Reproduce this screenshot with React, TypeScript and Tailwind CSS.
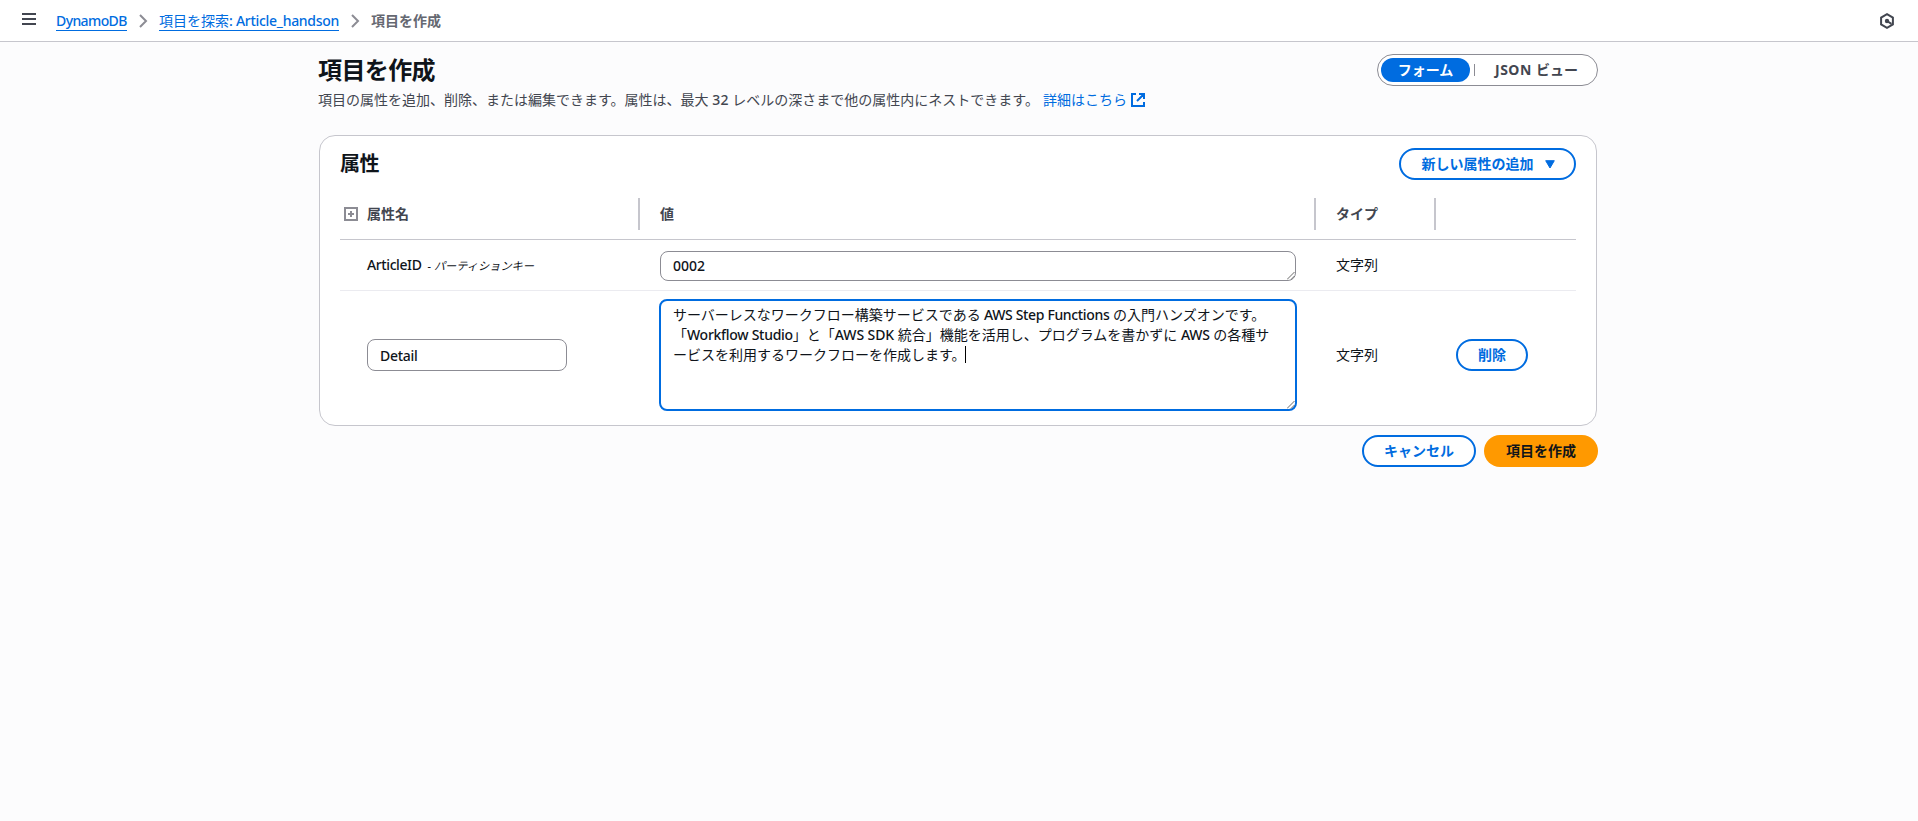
import type { ReactNode } from "react";

function Latin({ children, className = "tracking-[-0.28px]" }: { children: ReactNode; className?: string }) {
    return <span className={`font-medium ${className}`}>{children}</span>;
}

function BreadcrumbChevron() {
    return (
        <svg className="h-4 w-4 text-[#8c8c94]" viewBox="0 0 16 16" fill="none" stroke="currentColor" strokeWidth="2">
            <path d="M5 2l6 6-6 6" />
        </svg>
    );
}

function ResizeHandle() {
    return (
        <svg className="absolute bottom-0 right-0 h-2 w-2 text-[#6b6b6b]" viewBox="0 0 8 8" fill="none" stroke="currentColor">
            <path d="M0 7.5L7.5 0M4 7.5L7.5 4" />
        </svg>
    );
}

function PillButton({ children, className }: { children: ReactNode; className?: string }) {
    return (
        <button
            className={`flex h-8 items-center justify-center rounded-full border-2 border-[#006ce0] bg-white font-bold text-[#006ce0] ${className}`}
        >
            {children}
        </button>
    );
}

function TopBar() {
    return (
        <header className="flex h-[42px] items-center border-b border-[#c6c6cd] bg-white pl-[22px] pr-[23px]">
            <svg className="-mt-1 h-3 w-3.5 text-[#424650]" viewBox="0 0 14 12" fill="none" stroke="currentColor" strokeWidth="2">
                <path d="M0 1h14M0 6h14M0 11h14" />
            </svg>
            <nav className="ml-5 flex items-center">
                <a className="h-5 w-[71px] whitespace-nowrap border-b border-[#006ce0] text-[#006ce0]">
                    <Latin className="tracking-[-0.6px]">DynamoDB</Latin>
                </a>
                <span className="mx-2">
                    <BreadcrumbChevron />
                </span>
                <a className="h-5 w-[180px] whitespace-nowrap border-b border-[#006ce0] text-[#006ce0]">
                    項目を探索<Latin>: Article_handson</Latin>
                </a>
                <span className="mx-2">
                    <BreadcrumbChevron />
                </span>
                <span className="font-bold text-[#656871]">項目を作成</span>
            </nav>
            <svg className="ml-auto h-4 w-4 text-[#424650]" viewBox="0 0 16 16" fill="none" stroke="currentColor" strokeWidth="2">
                <path d="M8 1.2l5.9 3.4v6.8L8 14.8l-5.9-3.4V4.6z" />
                <path d="M8 8l4.5 2.8" />
                <circle cx="8" cy="8" r="2.2" fill="currentColor" stroke="none" />
            </svg>
        </header>
    );
}

function PageHeader() {
    return (
        <div className="flex justify-between">
            <div className="-ml-px">
                <h1 className="mt-[13px] text-2xl font-bold leading-[30px] tracking-[-0.6px]">項目を作成</h1>
                <p className="mt-[5px] flex items-center text-[#424650]">
                    <span className="whitespace-pre">
                        項目の属性を追加、削除、または編集できます。属性は、最大 <Latin className="tracking-[0.2px]">32</Latin> レベルの深さまで他の属性内にネストできます。
                    </span>
                    <a className="ml-1 flex items-center text-[#006ce0]">
                        詳細はこちら
                        <svg className="ml-[3px] h-4 w-4" viewBox="0 0 16 16" fill="none" stroke="currentColor" strokeWidth="2">
                            <path d="M6 2H2v12h12v-4M9 2h5v5M14 2L7 9" />
                        </svg>
                    </a>
                </p>
            </div>
            <div className="mt-3 flex h-8 w-[221px] items-center rounded-full border border-[#8c8c94] bg-white px-[3px] font-bold">
                <button className="h-6 w-[89px] rounded-full bg-[#006ce0] text-white">フォーム</button>
                <span className="ml-1 h-3 w-px bg-[#8c8c94]" />
                <button className="ml-5 whitespace-nowrap text-[#424650]">
                    <span className="tracking-[0.5px]">JSON </span>ビュー
                </button>
            </div>
        </div>
    );
}

function HeaderCell({ children, className = "pl-5" }: { children?: ReactNode; className?: string }) {
    return (
        <div className={`flex h-8 items-center border-r-2 border-[#c6c6cd] last:border-r-0 ${className}`}>{children}</div>
    );
}

const grid = "grid grid-cols-[300px_676px_120px_140px] items-center";

function AttributesCard() {
    return (
        <section className="mr-px h-[291px] rounded-2xl border border-[#c6c6cd] bg-white px-5">
            <div className="flex items-center justify-between pt-3">
                <h2 className="text-xl font-bold leading-6 tracking-[-0.4px]">属性</h2>
                <PillButton className="w-[177px] gap-[11px] pl-px">
                    新しい属性の追加
                    <svg className="h-[9px] w-2.5" viewBox="0 0 10 9" fill="currentColor" stroke="currentColor" strokeLinejoin="round">
                        <path d="M.7.7h8.6L5 8z" />
                    </svg>
                </PillButton>
            </div>

            <div className={`${grid} h-[60px] border-b border-[#c6c6cd] pt-2 font-bold text-[#424650]`}>
                <HeaderCell className="pl-1">
                    <svg className="mr-[9px] h-3.5 w-3.5 text-[#8c8c94]" viewBox="0 0 14 14" fill="none" stroke="currentColor" strokeWidth="2">
                        <rect x="1" y="1" width="12" height="12" />
                        <path d="M4 7h6M7 4v6" />
                    </svg>
                    属性名
                </HeaderCell>
                <HeaderCell>値</HeaderCell>
                <HeaderCell>タイプ</HeaderCell>
                <HeaderCell />
            </div>

            <div className={`${grid} h-[51px] border-b border-[#ebebf0]`}>
                <div className="whitespace-nowrap pl-[27px]">
                    <Latin className="tracking-[-0.4px]">ArticleID</Latin>
                    <span className="ml-1.5 text-[11.2px] italic">- パーティションキー</span>
                </div>
                <div className="relative ml-5 mt-0.5 h-[30px] w-[636px] rounded-lg border border-[#8c8c94] px-3 leading-7">
                    <Latin className="tracking-[0px]">0002</Latin>
                    <ResizeHandle />
                </div>
                <div className="pl-5">文字列</div>
            </div>

            <div className={`${grid} h-[128px]`}>
                <div className="ml-[27px] flex h-8 w-[200px] items-center rounded-lg border border-[#8c8c94] px-3 pt-0.5">
                    <Latin>Detail</Latin>
                </div>
                <div className="relative ml-[19px] h-28 w-[638px] whitespace-pre rounded-lg border-2 border-[#006ce0] px-3 pt-1">
                    <p>
                        サーバーレスなワークフロー構築サービスである<Latin className="tracking-[-0.35px]"> AWS Step Functions</Latin> の入門ハンズオンです。
                    </p>
                    <p>
                        「<Latin>Workflow Studio</Latin>」と「<Latin className="tracking-[-0.1px]">AWS SDK</Latin> 統合」機能を活用し、プログラムを書かずに <Latin>AWS</Latin> の各種サ
                    </p>
                    <p className="flex">
                        ービスを利用するワークフローを作成します。
                        <span className="-ml-px mt-px h-[17px] w-px bg-black" />
                    </p>
                    <ResizeHandle />
                </div>
                <div className="pl-5">文字列</div>
                <PillButton className="ml-5 w-[72px]">削除</PillButton>
            </div>
        </section>
    );
}

export default function App() {
    return (
        <div className="min-h-screen bg-[#fcfcfd] font-['Noto_Sans','Noto_Sans_CJK_JP',sans-serif] text-sm leading-5 text-[#0f141a]" lang="ja">
            <TopBar />
            <main className="mx-auto w-[1280px] pr-px">
                <PageHeader />
                <div className="mt-[25px]">
                    <AttributesCard />
                </div>
                <div className="mt-[9px] flex justify-end gap-2">
                    <PillButton className="w-[114px]">キャンセル</PillButton>
                    <button className="h-8 w-[114px] rounded-full bg-[#ff9900] font-bold">項目を作成</button>
                </div>
            </main>
        </div>
    );
}
